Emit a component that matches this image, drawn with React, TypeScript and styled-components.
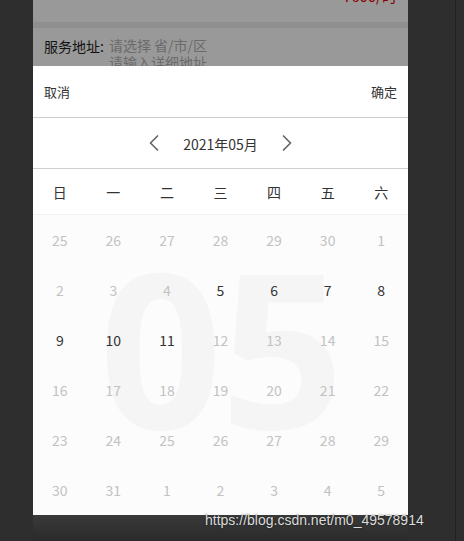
import styled, { createGlobalStyle } from 'styled-components';

const GlobalStyle = createGlobalStyle`
  html, body {
    margin: 0;
    padding: 0;
    background: #2e2e2e;
  }
  body {
    font-family: "Noto Sans CJK SC", "Noto Sans", sans-serif;
  }
`;

const Desktop = styled.div`
  position: relative;
  display: flex;
  width: 464px;
  height: 541px;
  overflow: hidden;
  background: #2e2e2e;
`;

const Gutter = styled.div`
  width: 33px;
  flex-shrink: 0;
`;

const Column = styled.div`
  display: flex;
  flex-direction: column;
  width: 375px;
  flex-shrink: 0;
`;

const Phone = styled.div`
  position: relative;
  width: 375px;
  height: 515px;
  overflow: hidden;
  background: #fff;
`;

const Footer = styled.div`
  height: 26px;
  background: linear-gradient(#3a3a3a, #2a2a2a);
`;

const SideStrip = styled.div`
  width: 47px;
  flex-shrink: 0;
  border-right: 1px solid #222;
`;

/* page under the mask */
const PriceRow = styled.div`
  display: flex;
  justify-content: flex-end;
  height: 22px;
  padding: 0 11px;
  overflow: hidden;
`;

const Price = styled.span`
  margin-top: -15px;
  font-size: 15px;
  line-height: 22px;
  color: #e00000;
`;

const Divider = styled.div`
  height: 6px;
  background: #eeeeee;
`;

const AddressRow = styled.div`
  display: flex;
  padding: 8px 11px 0;
  gap: 5px;
`;

const Label = styled.span`
  font-size: 14px;
  line-height: 20px;
  color: #1e1e1e;
`;

const Inputs = styled.div`
  display: flex;
  flex-direction: column;
  padding-top: 1px;
`;

const Placeholder = styled.span`
  font-size: 14px;
  line-height: 17px;
  color: #b2b2b2;
`;

const Mask = styled.div`
  position: absolute;
  inset: 0;
  background: rgba(0, 0, 0, 0.4);
`;

/* popup */
const Popup = styled.div`
  position: absolute;
  left: 0;
  right: 0;
  top: 66px;
  bottom: 0;
  display: flex;
  flex-direction: column;
  background: #fff;
`;

const Toolbar = styled.div`
  display: flex;
  align-items: center;
  justify-content: space-between;
  height: 51px;
  padding: 0 11px;
  border-bottom: 1px solid #cfcfcf;
`;

const ToolButton = styled.span`
  font-size: 13px;
  color: #333;
`;

const MonthNav = styled.div`
  display: flex;
  align-items: center;
  justify-content: center;
  gap: 24px;
  height: 50px;
  border-bottom: 1px solid #cfcfcf;
`;

const MonthTitle = styled.span`
  font-size: 14px;
  color: #333;
  padding-top: 1px;
`;

const Weekdays = styled.div`
  display: grid;
  grid-template-columns: repeat(7, 1fr);
  align-items: center;
  height: 45px;
  border-bottom: 1px solid #f2f2f2;
`;

const Weekday = styled.span`
  text-align: center;
  font-size: 14px;
  color: #333;
`;

const Body = styled.div`
  position: relative;
  flex: 1;
  background: #fcfcfc;
`;

const MonthMark = styled.div`
  position: absolute;
  left: 0;
  right: 0;
  top: 22px;
  text-align: center;
  font-family: "Open Sans", "Noto Sans", sans-serif;
  font-weight: 700;
  font-size: 216px;
  line-height: 216px;
  letter-spacing: -2px;
  color: #f5f5f5;
  pointer-events: none;
`;

const Days = styled.div`
  position: relative;
  display: grid;
  grid-template-columns: repeat(7, 1fr);
  grid-auto-rows: 50px;
  align-items: center;
`;

const Day = styled.span<{ $active?: boolean }>`
  text-align: center;
  font-size: 14px;
  color: ${(p) => (p.$active ? '#333' : '#c2c2c2')};
`;

const Credit = styled.span`
  position: absolute;
  left: 205px;
  top: 512px;
  font-family: "Liberation Sans", Arial, sans-serif;
  font-size: 14px;
  color: #dcdcdc;
  text-shadow: 0 0 2px rgba(0, 0, 0, 0.6);
`;

const Chevron = ({ dir }: { dir: 'left' | 'right' }) => (
  <svg width="10" height="16" viewBox="0 0 10 16">
    <path
      d={dir === 'left' ? 'M8.5 1 L1.5 8 L8.5 15' : 'M1.5 1 L8.5 8 L1.5 15'}
      fill="none"
      stroke="#666"
      strokeWidth="1.7"
      strokeLinecap="round"
      strokeLinejoin="round"
    />
  </svg>
);

const weekdays = ['日', '一', '二', '三', '四', '五', '六'];

const days: number[] = [
  25, 26, 27, 28, 29, 30,
  ...Array.from({ length: 31 }, (_, i) => i + 1),
  1, 2, 3, 4, 5,
];

export default function App() {
  return (
    <>
      <GlobalStyle />
      <Desktop>
        <Gutter />
        <Column>
          <Phone>
            <PriceRow>
              <Price>¥600/时</Price>
            </PriceRow>
            <Divider />
            <AddressRow>
              <Label>服务地址:</Label>
              <Inputs>
                <Placeholder>请选择 省/市/区</Placeholder>
                <Placeholder>请输入详细地址</Placeholder>
              </Inputs>
            </AddressRow>
            <Mask />
            <Popup>
              <Toolbar>
                <ToolButton>取消</ToolButton>
                <ToolButton>确定</ToolButton>
              </Toolbar>
              <MonthNav>
                <Chevron dir="left" />
                <MonthTitle>2021年05月</MonthTitle>
                <Chevron dir="right" />
              </MonthNav>
              <Weekdays>
                {weekdays.map((w) => (
                  <Weekday key={w}>{w}</Weekday>
                ))}
              </Weekdays>
              <Body>
                <MonthMark>05</MonthMark>
                <Days>
                  {days.map((d, i) => (
                    <Day key={i} $active={i >= 10 && i <= 16}>
                      {d}
                    </Day>
                  ))}
                </Days>
              </Body>
            </Popup>
          </Phone>
          <Footer />
        </Column>
        <SideStrip />
        <Credit>https://blog.csdn.net/m0_49578914</Credit>
      </Desktop>
    </>
  );
}
